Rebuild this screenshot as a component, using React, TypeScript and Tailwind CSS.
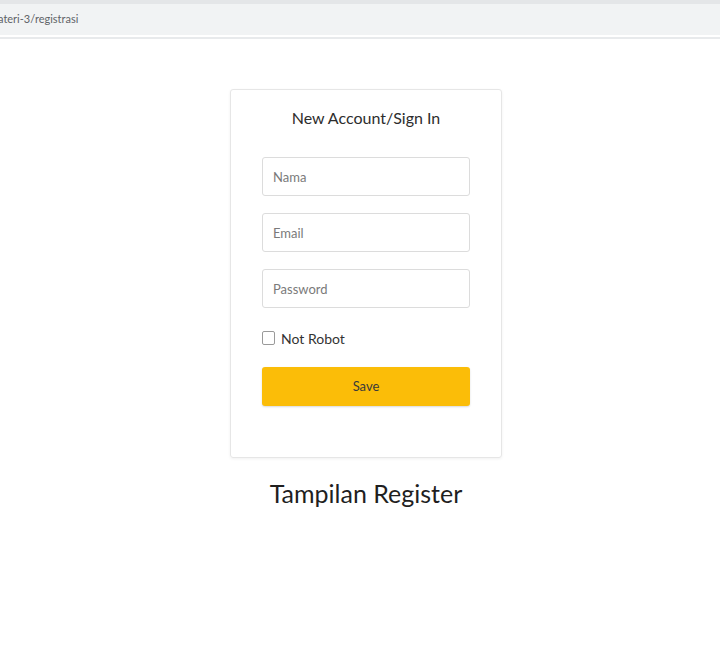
export default function App() {
  return (
    <div className="min-h-[672px] w-[720px] bg-white font-['Lato',sans-serif]">
      {/* browser address strip */}
      <div className="h-[4px] bg-[#e4e6e8]" />
      <div className="flex h-[31px] items-center bg-[#f1f3f4] text-[11px] text-[#5f6368]">
        <span className="-ml-[2px]">ateri-3/registrasi</span>
      </div>
      <div className="h-[2px] bg-white" />
      <div className="h-[2px] bg-[#e8eaec]" />

      <div className="flex flex-col items-center pl-[12px] pt-[50px]">
        <div className="flex w-[272px] flex-col items-center rounded-[3px] border border-[#e6e6e6] px-[31px] pb-[51px] pt-[15px] shadow-[0_1px_3px_rgba(0,0,0,0.06)]">
          <h1 className="text-[16px] leading-[26px] text-[#2d2d2d]">New Account/Sign In</h1>

          <div className="mt-[26px] flex w-full flex-col gap-[17px]">
            {["Nama", "Email", "Password"].map((p) => (
              <input
                key={p}
                placeholder={p}
                className="h-[39px] w-full rounded-[3px] border border-[#dcdcdc] px-[10px] text-[13px] text-[#333] placeholder:text-[#7a7a7a] outline-none"
              />
            ))}
          </div>

          <label className="mt-[20px] flex h-[20px] w-full items-center gap-[6px] text-[14px] text-[#333]">
            <span className="h-[14px] w-[13px] rounded-[2px] border border-[#9a9a9a] bg-white" />
            Not Robot
          </label>

          <button className="mt-[19px] h-[39px] w-full rounded-[3px] bg-[#fbbd08] text-[13px] text-[#3a3a3a] shadow-[0_1px_2px_rgba(0,0,0,0.15)]">
            Save
          </button>
        </div>

        <p className="mt-[19px] text-[25px] leading-[32px] text-[#1f1f1f]">Tampilan Register</p>
      </div>
    </div>
  );
}
